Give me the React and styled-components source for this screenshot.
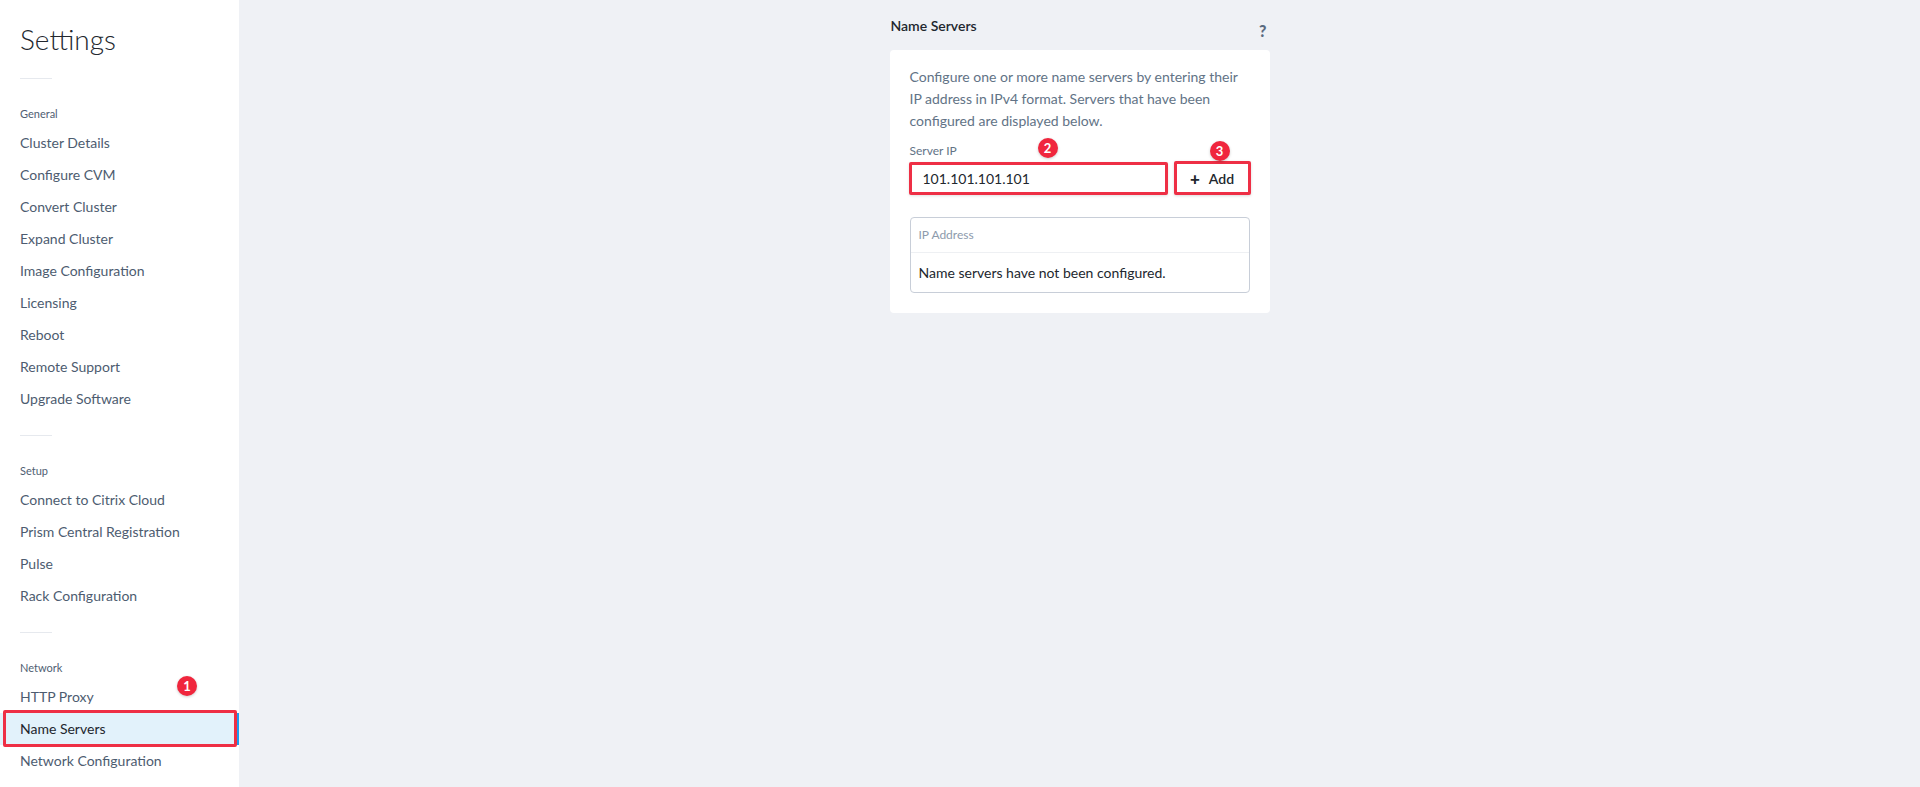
import React from 'react';
import styled, { createGlobalStyle } from 'styled-components';

const GlobalStyle = createGlobalStyle`
  html, body {
    margin: 0;
    padding: 0;
    height: 100%;
  }
  body {
    font-family: Lato, "Open Sans", "Liberation Sans", sans-serif;
    -webkit-font-smoothing: antialiased;
  }
  * {
    box-sizing: border-box;
  }
`

const Page = styled.div`
  display: flex;
  height: 787px;
  background: #eff1f5;
`

const Sidebar = styled.nav`
  width: 239px;
  flex-shrink: 0;
  background: #ffffff;
  padding-top: 22px;
`

const Title = styled.h1`
  margin: 0 0 22px 20px;
  font-size: 28px;
  line-height: 34px;
  font-weight: 300;
  color: #22272e;
`

const Divider = styled.div`
  width: 32px;
  height: 1px;
  margin-left: 20px;
  background: #e6e9ee;
`

const Section = styled.div`
  margin-bottom: 20px;
`

const GroupLabel = styled.div`
  margin: 27px 0 5px 20px;
  font-size: 11px;
  line-height: 16px;
  color: #4f5e72;
`

const NavItem = styled.div`
  position: relative;
  height: 32px;
  line-height: 32px;
  padding-left: 20px;
  font-size: 14px;
  color: ${p => (p.active ? '#22272e' : '#4d5c70')};
  background: ${p => (p.active ? '#e2f2fb' : 'transparent')};
  box-shadow: ${p => (p.active ? 'inset -2px 0 0 #1b9cf0' : 'none')};
`

const Highlight = styled.span`
  position: absolute;
  top: -3px;
  bottom: -2px;
  left: 3px;
  right: 2px;
  border: 3px solid #ee2f45;
  border-radius: 2px;
  pointer-events: none;
`

const Badge = styled.span`
  position: absolute;
  top: ${p => p.top}px;
  left: ${p => p.left}px;
  width: 20px;
  height: 20px;
  border-radius: 50%;
  background: #f0263d;
  color: #ffffff;
  font-size: 13px;
  font-weight: 700;
  line-height: 20px;
  text-align: center;
  box-shadow: 0 1px 3px rgba(0, 0, 0, 0.2);
  z-index: 2;
`

const Main = styled.main`
  flex: 1;
  display: flex;
  justify-content: center;
  padding-top: 16px;
`

const Column = styled.div`
  width: 380px;
`

const Header = styled.div`
  display: flex;
  justify-content: space-between;
  align-items: flex-start;
  height: 20px;
  margin-bottom: 14px;
`

const HeaderTitle = styled.h2`
  margin: 0 0 0 1px;
  font-size: 14px;
  line-height: 20px;
  font-weight: 600;
  color: #22272e;
`

const Help = styled.span`
  margin: 5px 3px 0 0;
  font-size: 16px;
  line-height: 20px;
  font-weight: 900;
  color: #5a6b80;
`

const Panel = styled.section`
  background: #ffffff;
  border-radius: 4px;
  padding: 16px 20px 20px;
`

const Description = styled.p`
  margin: 0 0 11px;
  font-size: 14px;
  line-height: 22px;
  color: #627386;
`

const FieldLabel = styled.div`
  font-size: 12px;
  line-height: 16px;
  color: #627386;
  margin-bottom: 3px;
`

const InputRow = styled.div`
  display: flex;
  gap: 6px;
  margin-left: -1px;
`

const InputWrap = styled.div`
  position: relative;
  flex: 1;
`

const Input = styled.div`
  height: 33px;
  border: 3px solid #ee2f45;
  border-radius: 2px;
  padding-left: 11px;
  font-size: 14px;
  line-height: 27px;
  color: #22272e;
  background: #ffffff;
  box-shadow: 0 1px 3px rgba(0, 0, 0, 0.12);
`

const Button = styled.button`
  position: relative;
  width: 77px;
  height: 34px;
  margin-top: -1px;
  margin-right: -1px;
  border: 3px solid #ee2f45;
  border-radius: 2px;
  background: #ffffff;
  box-shadow: 0 1px 3px rgba(0, 0, 0, 0.15);
  font-family: inherit;
  font-size: 14px;
  font-weight: 600;
  color: #22272e;
  display: flex;
  align-items: center;
  justify-content: center;
  gap: 9px;
  padding: 0;
`

const Plus = styled.span`
  font-size: 17px;
  font-weight: 900;
  line-height: 1;
`

const Table = styled.div`
  margin-top: 22px;
  border: 1px solid #c8ced8;
  border-radius: 4px;
`

const TableHead = styled.div`
  height: 35px;
  line-height: 34px;
  padding-left: 8px;
  font-size: 12px;
  color: #8d9aac;
  border-bottom: 1px solid #eef0f3;
`

const TableRow = styled.div`
  height: 39px;
  line-height: 40px;
  padding-left: 8px;
  font-size: 14px;
  color: #22272e;
`

const sections = [
  { label: 'General', items: ['Cluster Details', 'Configure CVM', 'Convert Cluster', 'Expand Cluster', 'Image Configuration', 'Licensing', 'Reboot', 'Remote Support', 'Upgrade Software'] },
  { label: 'Setup', items: ['Connect to Citrix Cloud', 'Prism Central Registration', 'Pulse', 'Rack Configuration'] },
  { label: 'Network', items: ['HTTP Proxy', 'Name Servers', 'Network Configuration'] },
]

export default function App() {
  return (
    <Page>
      <GlobalStyle />
      <Sidebar>
        <Title>Settings</Title>
        {sections.map(section => (
          <Section key={section.label}>
            <Divider />
            <GroupLabel>{section.label}</GroupLabel>
            {section.items.map(item => {
              const active = item === 'Name Servers'
              return (
                <NavItem key={item} active={active}>
                  {item}
                  {active && <Highlight />}
                  {active && <Badge top={-37} left={177}>1</Badge>}
                </NavItem>
              )
            })}
          </Section>
        ))}
      </Sidebar>
      <Main>
        <Column>
          <Header>
            <HeaderTitle>Name Servers</HeaderTitle>
            <Help>?</Help>
          </Header>
          <Panel>
            <Description>
              Configure one or more name servers by entering their IP address in IPv4 format. Servers that have been configured are displayed below.
            </Description>
            <FieldLabel>Server IP</FieldLabel>
            <InputRow>
              <InputWrap>
                <Input>101.101.101.101</Input>
                <Badge top={-24} left={129}>2</Badge>
              </InputWrap>
              <Button>
                <Plus>+</Plus>
                Add
                <Badge top={-23} left={33}>3</Badge>
              </Button>
            </InputRow>
            <Table>
              <TableHead>IP Address</TableHead>
              <TableRow>Name servers have not been configured.</TableRow>
            </Table>
          </Panel>
        </Column>
      </Main>
    </Page>
  )
}
